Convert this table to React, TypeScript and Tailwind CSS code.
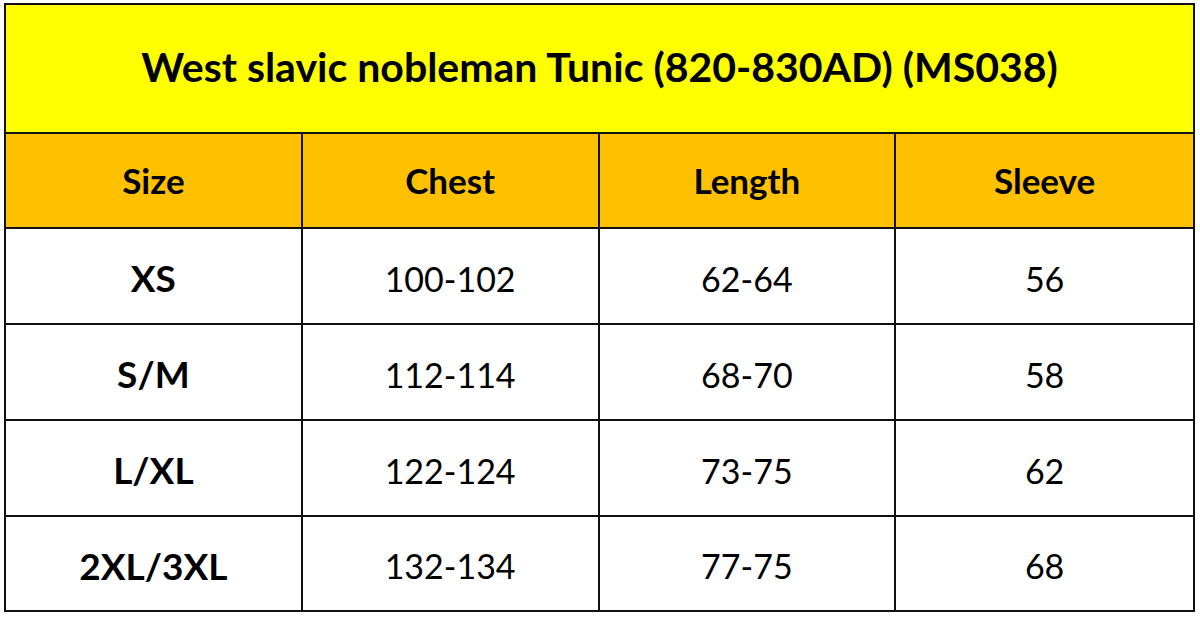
const headers = ["Size", "Chest", "Length", "Sleeve"];

const rows = [
  ["XS", "100-102", "62-64", "56"],
  ["S/M", "112-114", "68-70", "58"],
  ["L/XL", "122-124", "73-75", "62"],
  ["2XL/3XL", "132-134", "77-75", "68"],
];

export default function App() {
  return (
    <div className="h-[617px] w-[1200px] bg-white pl-[4px] pt-[3px] font-['Lato',_sans-serif] text-black">
      <div className="w-[1191px] border-2 border-[#111]">
        <div className="flex h-[129px] items-center justify-center border-b-2 border-[#111] bg-[#ffff00] pb-[4px] text-[41px] font-bold">
          West slavic nobleman Tunic (820-830AD) (MS038)
        </div>
        <div className="grid h-[95px] grid-cols-4 border-b-2 border-[#111] bg-[#ffc000]">
          {headers.map((h, i) => (
            <div
              key={h}
              className={`flex items-center justify-center text-[35px] font-bold ${i < 3 ? "border-r-2 border-[#111]" : ""}`}
            >
              {h}
            </div>
          ))}
        </div>
        {rows.map((row, r) => (
          <div
            key={row[0]}
            className={`grid grid-cols-4 ${r < rows.length - 1 ? "h-[96px] border-b-2 border-[#111]" : "h-[93px]"}`}
          >
            {row.map((cell, i) => (
              <div
                key={i}
                className={`flex items-center justify-center pt-[4px] ${i === 0 ? "text-[37px] font-bold" : "text-[34px]"} ${i < 3 ? "border-r-2 border-[#111]" : ""}`}
              >
                {cell}
              </div>
            ))}
          </div>
        ))}
      </div>
    </div>
  );
}
